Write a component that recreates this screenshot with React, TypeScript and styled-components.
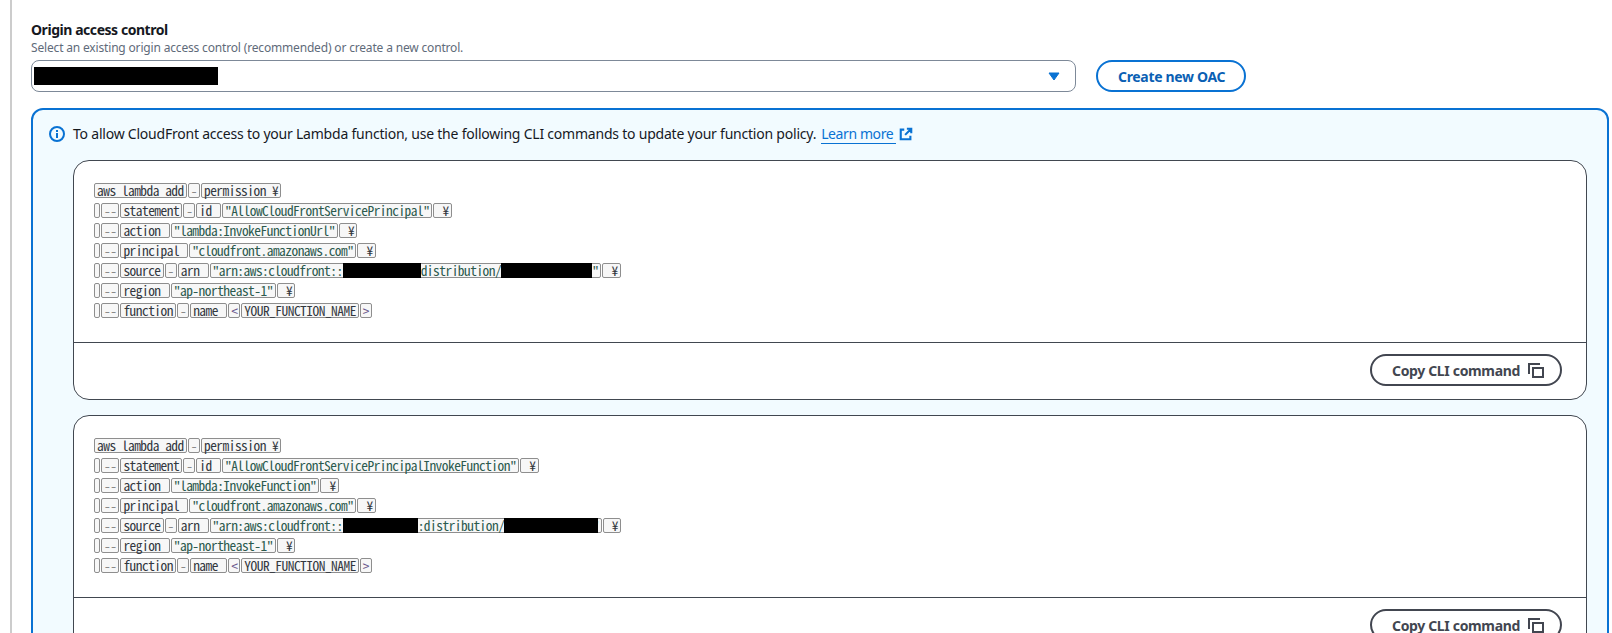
import React from 'react';
import styled, { createGlobalStyle } from 'styled-components';

const GlobalStyle = createGlobalStyle`
  html, body {
    margin: 0;
    height: 633px;
    overflow: hidden;
    background: #ffffff;
  }
  body {
    font-family: "Noto Sans", "Liberation Sans", sans-serif;
    color: #16191f;
  }
`;

const Page = styled.div`
  height: 633px;
  margin-left: 10px;
  padding: 21px 3px 0 19px;
  border-left: 2px solid #cccccc;
  box-sizing: border-box;
  overflow: hidden;
`;

const Label = styled.div`
  font-size: 14px;
  font-weight: 700;
  line-height: 18px;
  letter-spacing: -0.45px;
  color: #16191f;
`;

const Description = styled.div`
  font-size: 12px;
  line-height: 18px;
  letter-spacing: -0.17px;
  color: #5f6b7a;
`;

const ControlRow = styled.div`
  display: flex;
  gap: 20px;
  margin-top: 3px;
  margin-bottom: 16px;
`;

const SelectBox = styled.div`
  flex: 0 0 1045px;
  height: 32px;
  box-sizing: border-box;
  display: flex;
  align-items: center;
  justify-content: space-between;
  padding: 0 15px 0 2px;
  border: 1px solid #7d8998;
  border-radius: 8px;
`;

const Redaction = styled.span<{ $width: number }>`
  display: inline-block;
  width: ${(p) => p.$width}px;
  height: 18px;
  background: #000000;
`;

const OutlineButton = styled.button`
  height: 32px;
  box-sizing: border-box;
  padding: 0 19px 0 20px;
  border: 2px solid #0972d3;
  border-radius: 16px;
  background: #ffffff;
  color: #0a5fb4;
  font-family: inherit;
  font-size: 14px;
  font-weight: 700;
  letter-spacing: -0.33px;
  white-space: nowrap;
`;

const Alert = styled.div`
  border: 2px solid #0972d3;
  border-radius: 12px;
  background: #f2fbff;
  padding: 14px 20px 0 16px;
  height: 620px;
  box-sizing: border-box;
`;

const AlertHead = styled.div`
  display: flex;
  align-items: center;
  gap: 8px;
  font-size: 14px;
  line-height: 20px;
  letter-spacing: -0.22px;
  color: #16191f;
`;

const LearnMore = styled.a`
  color: #0972d3;
  margin-left: -3px;
  display: inline-flex;
  align-items: center;
  gap: 3px;
  letter-spacing: -0.4px;
`;

const LearnText = styled.span`
  border-bottom: 1px solid #0972d3;
  line-height: 18px;
  padding-right: 3px;
`;

const CardList = styled.div`
  display: flex;
  flex-direction: column;
  gap: 15px;
  margin-top: 16px;
  margin-left: 24px;
`;

const Card = styled.div`
  height: 240px;
  box-sizing: border-box;
  background: #ffffff;
  border: 1px solid #414750;
  border-radius: 16px;
  display: flex;
  flex-direction: column;
`;

const CodeBlock = styled.div`
  height: 182px;
  box-sizing: border-box;
  padding: 19px 20px 0;
  border-bottom: 1px solid #414750;
`;

const CodeRow = styled.div`
  display: flex;
  align-items: center;
  height: 20px;
  gap: 1px;
`;

const Token = styled.span<{ $kind?: 'string' | 'dash' | 'angle' }>`
  display: inline-block;
  height: 15px;
  box-sizing: border-box;
  padding: 0 2px;
  min-width: 5px;
  border: 1px solid #8e8e8e;
  border-radius: 2px;
  background: #f7f7f7;
  font-family: "Noto Sans CJK JP", "Liberation Mono", monospace;
  font-feature-settings: "hwid";
  font-size: 13.4px;
  letter-spacing: -0.5px;
  line-height: 13px;
  white-space: pre;
  color: ${(p) =>
    p.$kind === 'string' ? '#2c5a4e' : p.$kind === 'dash' ? '#8a8a8a' : p.$kind === 'angle' ? '#6b5a8e' : '#33383f'};
`;

const CodeRedaction = styled.span<{ $width: number; $overlap?: number }>`
  display: inline-block;
  position: relative;
  vertical-align: top;
  width: ${(p) => p.$width}px;
  height: 15px;
  margin-top: -1px;
  margin-right: ${(p) => -(p.$overlap ?? 0)}px;
  background: #000000;
`;

const CardFooter = styled.div`
  display: flex;
  justify-content: flex-end;
  padding: 11px 24px 0 0;
`;

const CopyButton = styled.button`
  height: 32px;
  box-sizing: border-box;
  display: flex;
  align-items: center;
  gap: 8px;
  padding: 0 16px 0 20px;
  border: 2px solid #424650;
  border-radius: 16px;
  background: #ffffff;
  color: #424650;
  font-family: inherit;
  font-size: 14px;
  font-weight: 700;
  letter-spacing: -0.34px;
  white-space: nowrap;
`;

const InfoIcon = () => (
  <svg width="16" height="16" viewBox="0 0 16 16" fill="none" stroke="#0972d3" strokeWidth="2">
    <circle cx="8" cy="8" r="7" />
    <path d="M8 7v5M8 4v2" />
  </svg>
);

const ExternalIcon = () => (
  <svg width="14" height="14" viewBox="0 0 16 16" fill="none" stroke="#0972d3" strokeWidth="2.4">
    <path d="M9 2h5v5M14 2L7 9M6 3H2v11h11v-4" />
  </svg>
);

const CopyIcon = () => (
  <svg width="16" height="16" viewBox="0 0 16 16" fill="none" stroke="#424650" strokeWidth="2">
    <path d="M1 12V2h11" />
    <rect x="5" y="6" width="10" height="9" />
  </svg>
);

const CaretIcon = () => (
  <svg width="12" height="9" viewBox="0 0 12 9" fill="#0972d3" stroke="#0972d3" strokeWidth="1" strokeLinejoin="round">
    <path d="M1 1h10L6 8z" />
  </svg>
);

const Blank = () => <Token />;
const Dashes = () => <Token $kind="dash">--</Token>;
const Dash = () => <Token $kind="dash">-</Token>;
const Str = ({ children }: { children: React.ReactNode }) => <Token $kind="string">{children}</Token>;

const Yen = () => <Token> ¥</Token>;

const CommandCard = ({
  statementId,
  action,
  sourceArn,
}: {
  statementId: string;
  action: string;
  sourceArn: React.ReactNode;
}) => (
  <Card>
    <CodeBlock>
      <CodeRow>
        <Token>aws lambda add</Token>
        <Dash />
        <Token>permission ¥</Token>
      </CodeRow>
      <CodeRow>
        <Blank />
        <Dashes />
        <Token>statement</Token>
        <Dash />
        <Token>id </Token>
        <Str>{statementId}</Str>
        <Yen />
      </CodeRow>
      <CodeRow>
        <Blank />
        <Dashes />
        <Token>action </Token>
        <Str>{action}</Str>
        <Yen />
      </CodeRow>
      <CodeRow>
        <Blank />
        <Dashes />
        <Token>principal </Token>
        <Str>"cloudfront.amazonaws.com"</Str>
        <Yen />
      </CodeRow>
      <CodeRow>
        <Blank />
        <Dashes />
        <Token>source</Token>
        <Dash />
        <Token>arn </Token>
        <Str>{sourceArn}</Str>
        <Yen />
      </CodeRow>
      <CodeRow>
        <Blank />
        <Dashes />
        <Token>region </Token>
        <Str>"ap-northeast-1"</Str>
        <Yen />
      </CodeRow>
      <CodeRow>
        <Blank />
        <Dashes />
        <Token>function</Token>
        <Dash />
        <Token>name </Token>
        <Token $kind="angle">&lt;</Token>
        <Token>YOUR_FUNCTION_NAME</Token>
        <Token $kind="angle">&gt;</Token>
      </CodeRow>
    </CodeBlock>
    <CardFooter>
      <CopyButton>
        Copy CLI command
        <CopyIcon />
      </CopyButton>
    </CardFooter>
  </Card>
);

export default function App() {
  return (
    <>
      <GlobalStyle />
      <Page>
        <Label>Origin access control</Label>
        <Description>Select an existing origin access control (recommended) or create a new control.</Description>
        <ControlRow>
          <SelectBox>
            <Redaction $width={184} />
            <CaretIcon />
          </SelectBox>
          <OutlineButton>Create new OAC</OutlineButton>
        </ControlRow>
        <Alert>
          <AlertHead>
            <InfoIcon />
            <span>
              To allow CloudFront access to your Lambda function, use the following CLI commands to update your function
              policy.
            </span>
            <LearnMore>
              <LearnText>Learn more</LearnText>
              <ExternalIcon />
            </LearnMore>
          </AlertHead>
          <CardList>
            <CommandCard
              statementId={'"AllowCloudFrontServicePrincipal"'}
              action={'"lambda:InvokeFunctionUrl"'}
              sourceArn={
                <>
                  "arn:aws:cloudfront::
                  <CodeRedaction $width={78} />
                  distribution/
                  <CodeRedaction $width={91} />"
                </>
              }
            />
            <CommandCard
              statementId={'"AllowCloudFrontServicePrincipalInvokeFunction"'}
              action={'"lambda:InvokeFunction"'}
              sourceArn={
                <>
                  "arn:aws:cloudfront::
                  <CodeRedaction $width={75} />
                  :distribution/
                  <CodeRedaction $width={94} $overlap={6} />"
                </>
              }
            />
          </CardList>
        </Alert>
      </Page>
    </>
  );
}
